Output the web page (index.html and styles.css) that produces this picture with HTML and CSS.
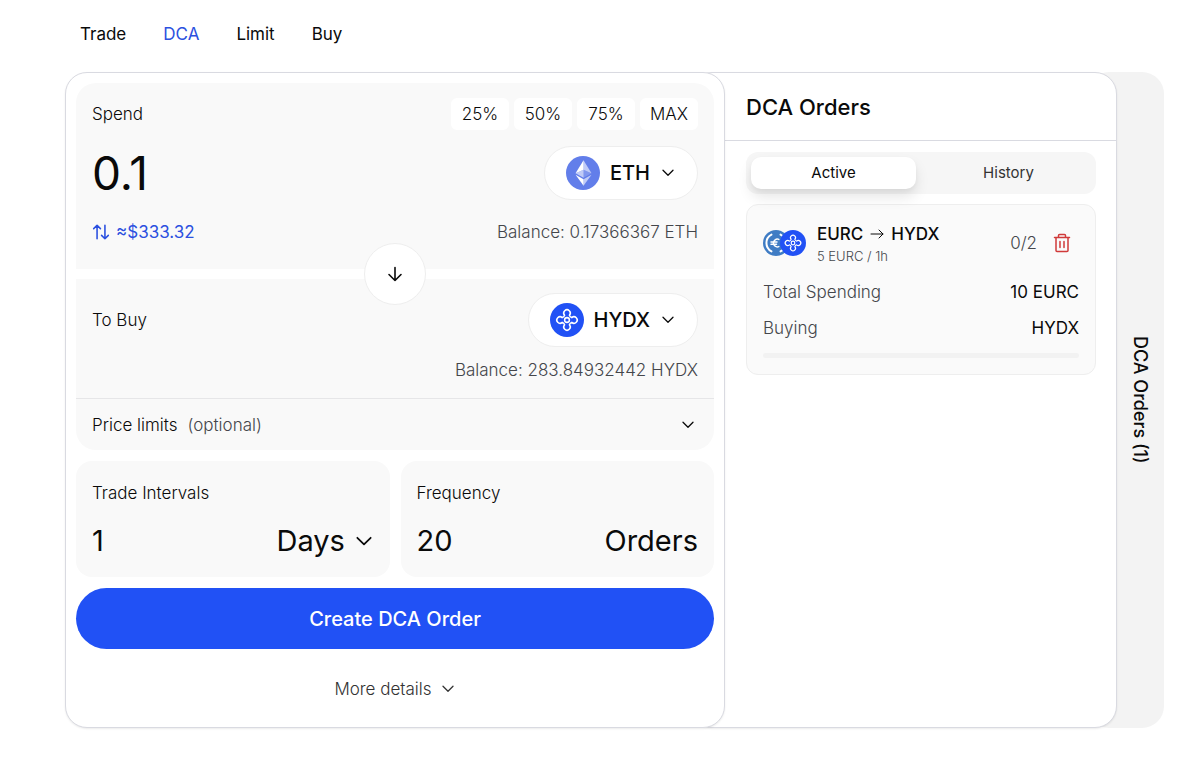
FILE: index.html
```html
<!DOCTYPE html>
<html lang="en">
<head>
    <meta charset="UTF-8">
    <meta name="viewport" content="width=device-width, initial-scale=1.0">
    <title>DCA</title>
    <link rel="stylesheet" href="styles.css">
</head>
<body>
    <!-- shared icons -->
    <svg class="defs" width="0" height="0" aria-hidden="true">
        <symbol id="chevron" viewBox="0 0 12 8">
            <path d="M1 1.2l5 5 5-5" fill="none" stroke="currentColor" stroke-width="1.3" stroke-linecap="round" stroke-linejoin="round"/>
        </symbol>
        <symbol id="hydx" viewBox="-50 -50 100 100">
            <circle r="50" fill="#2151f5"/>
            <g fill="none" stroke="#fff" stroke-width="4.5" stroke-linejoin="round">
                <path d="M-7 -14 A9.5 9.5 0 1 1 7 -14 Q9 -9 14 -7 A9.5 9.5 0 1 1 14 7 Q9 9 7 14 A9.5 9.5 0 1 1 -7 14 Q-9 9 -14 7 A9.5 9.5 0 1 1 -14 -7 Q-9 -9 -7 -14Z"/>
                <circle r="7"/>
            </g>
        </symbol>
    </svg>

    <nav class="nav">
        <a href="#trade">Trade</a>
        <a href="#dca" class="active">DCA</a>
        <a href="#limit">Limit</a>
        <a href="#buy">Buy</a>
    </nav>

    <main class="layout">
        <form class="trade" onsubmit="return false">
            <section class="spend">
                <div class="row">
                    <label for="amount">Spend</label>
                    <div class="percents">
                        <button type="button">25%</button>
                        <button type="button">50%</button>
                        <button type="button">75%</button>
                        <button type="button">MAX</button>
                    </div>
                </div>
                <div class="row">
                    <input id="amount" class="amount" type="text" value="0.1">
                    <button type="button" class="token">
                        <svg class="token-icon" viewBox="0 0 32 32">
                            <circle cx="16" cy="16" r="16" fill="#627eea"/>
                            <g fill="#fff">
                                <path fill-opacity=".6" d="M16.500 4v8.870l7.500 3.350z"/>
                                <path d="M16.500 4L9 16.220l7.500-3.350z"/>
                                <path fill-opacity=".6" d="M16.500 21.970v6.030L24 17.620z"/>
                                <path d="M16.500 28v-6.030L9 17.620z"/>
                                <path fill-opacity=".2" d="M16.500 20.570l7.500-4.350-7.500-3.350z"/>
                                <path fill-opacity=".6" d="M9 16.220l7.500 4.350v-7.700z"/>
                            </g>
                        </svg>
                        ETH
                        <svg class="chevron"><use href="#chevron"/></svg>
                    </button>
                </div>
                <div class="row">
                    <button type="button" class="fiat">
                        <svg viewBox="0 0 16 16" fill="none" stroke="currentColor" stroke-width="1.4" stroke-linecap="round" stroke-linejoin="round">
                            <path d="M4.500 14V2M1.500 5l3-3 3 3M8.500 11l3 3 3-3M11.500 14V2"/>
                        </svg>
                        ≈$333.32
                    </button>
                    <span class="balance">Balance: 0.17366367 ETH</span>
                </div>
                <button type="button" class="switch" aria-label="Switch tokens">
                    <svg viewBox="0 0 18 18" fill="none" stroke="currentColor" stroke-width="1.6" stroke-linecap="round" stroke-linejoin="round">
                        <path d="M9 2.500v13M3 9.500l6 6 6-6"/>
                    </svg>
                </button>
            </section>

            <section class="receive">
                <div class="row">
                    <span>To Buy</span>
                    <button type="button" class="token">
                        <svg class="token-icon"><use href="#hydx"/></svg>
                        HYDX
                        <svg class="chevron"><use href="#chevron"/></svg>
                    </button>
                </div>
                <span class="balance">Balance: 283.84932442 HYDX</span>
            </section>

            <button type="button" class="limits">
                <span>Price limits</span>
                <span class="muted">(optional)</span>
                <svg class="chevron"><use href="#chevron"/></svg>
            </button>

            <div class="schedule">
                <section class="box">
                    <label for="interval">Trade Intervals</label>
                    <div class="box-value">
                        <input id="interval" type="text" value="1">
                        <span class="unit">
                            <select aria-label="Interval unit">
                                <option>Days</option>
                            </select>
                            <svg class="chevron big"><use href="#chevron"/></svg>
                        </span>
                    </div>
                </section>
                <section class="box">
                    <label for="frequency">Frequency</label>
                    <div class="box-value">
                        <input id="frequency" type="text" value="20">
                        <span>Orders</span>
                    </div>
                </section>
            </div>

            <button type="submit" class="create">Create DCA Order</button>
            <button type="button" class="more">
                More details
                <svg class="chevron"><use href="#chevron"/></svg>
            </button>
        </form>

        <section class="orders">
            <h2>DCA Orders</h2>
            <div class="orders-body">
                <div class="tabs">
                    <button type="button" class="active">Active</button>
                    <button type="button">History</button>
                </div>
                <article class="order">
                    <div class="order-head">
                        <div class="pair-icons">
                            <svg viewBox="0 0 26 26">
                                <circle cx="13" cy="13" r="13" fill="#3f7cc4"/>
                                <g fill="none" stroke="#fff" stroke-linecap="round">
                                    <path stroke-width="2" d="M8.500 4.600a9.500 9.500 0 0 0 0 16.800M17.500 4.600a9.500 9.500 0 0 1 0 16.800"/>
                                    <path stroke-width="1.500" d="M15.800 9.400a3.900 3.900 0 1 0 0 7.200M8 12h6M8 14.200h5.500"/>
                                </g>
                            </svg>
                            <svg><use href="#hydx"/></svg>
                        </div>
                        <div class="pair">
                            <h3>EURC
                                <svg viewBox="0 0 14 12" fill="none" stroke="currentColor" stroke-linecap="round" stroke-linejoin="round"><path d="M1 6h12M9 2l4 4-4 4"/></svg>
                                HYDX</h3>
                            <p>5 EURC / 1h</p>
                        </div>
                        <span class="count">0/2</span>
                        <button type="button" class="delete" aria-label="Cancel order">
                            <svg viewBox="0 0 18 20" fill="none" stroke="currentColor" stroke-width="1.500" stroke-linecap="round" stroke-linejoin="round">
                                <path d="M1.500 4.500h15M5.500 4.500V2.500q0-1 1-1h5q1 0 1 1v2M3 4.500V17.500q0 1 1 1h10q1 0 1-1V4.500M7 8.500v6M11 8.500v6"/>
                            </svg>
                        </button>
                    </div>
                    <dl>
                        <dt>Total Spending</dt>
                        <dd>10 EURC</dd>
                        <dt>Buying</dt>
                        <dd>HYDX</dd>
                    </dl>
                    <div class="progress"></div>
                </article>
            </div>
        </section>

        <button type="button" class="side-tab"><span>DCA Orders (1)</span></button>
    </main>
</body>
</html>
```
FILE: styles.css
```css
* {
    box-sizing: border-box;
}

body {
    margin: 0;
    padding: 18px 36px 38px 65px;
    background-color: #fff;
    color: #0a0a0a;
    font-family: Inter, "Liberation Sans", sans-serif;
    font-size: 17px;
    line-height: 32px;
}

button, input, select {
    margin: 0;
    padding: 0;
    border: none;
    background: none;
    color: inherit;
    font: inherit;
}

button {
    cursor: pointer;
}

svg {
    display: block;
    flex: none;
}

.defs {
    position: absolute;
}

.nav {
    display: flex;
    gap: 37px;
    padding: 0 15px;
    margin-bottom: 22px;
}

.nav a {
    color: #0a0a0a;
    text-decoration: none;
}

.nav a.active {
    color: #2b50e0;
}

/* main panels */
.layout {
    display: grid;
    grid-template-columns: minmax(0, 660fr) minmax(0, 392fr) 47px;
}

.trade, .orders {
    background-color: #fff;
    border: 1px solid #d9dae1;
    border-radius: 22px;
    box-shadow: 0 1px 2px rgba(0, 0, 0, 0.08);
}

.trade {
    position: relative;
    z-index: 2;
    display: flex;
    flex-direction: column;
    padding: 10px;
    font-weight: 300;
}

.row {
    display: flex;
    align-items: center;
    justify-content: space-between;
}

.spend, .receive, .limits, .box {
    background-color: #f9f9f9;
}

.spend {
    position: relative;
    display: flex;
    flex-direction: column;
    gap: 16px;
    padding: 15px 16px 21px;
    margin-bottom: 10px;
    border-radius: 20px 20px 0 0;
}

.percents {
    display: flex;
    gap: 5px;
}

.percents button {
    width: 58px;
    border-radius: 6px;
    background-color: #fff;
}

.amount {
    flex: 1;
    min-width: 0;
    height: 54px;
    font-size: 46px;
    font-weight: 400;
}

.token {
    display: flex;
    align-items: center;
    gap: 10px;
    height: 54px;
    padding: 0 21px;
    border: 1px solid #eee;
    border-radius: 27px;
    background-color: #fff;
    font-size: 20px;
    font-weight: 500;
}

.token-icon {
    width: 34px;
    height: 34px;
}

.chevron {
    width: 12px;
    height: 8px;
    margin: 0 2px;
}

.fiat {
    display: flex;
    align-items: center;
    gap: 6px;
    color: #2b50e0;
    font-weight: 400;
}

.fiat svg {
    width: 18px;
    height: 18px;
}

.balance {
    color: #44464b;
}

.switch {
    position: absolute;
    left: 50%;
    bottom: -36px;
    display: grid;
    place-items: center;
    width: 62px;
    height: 62px;
    border: 1px solid #eee;
    border-radius: 50%;
    background-color: #fff;
    transform: translateX(-50%);
}

.switch svg {
    width: 18px;
    height: 18px;
}

.receive {
    display: flex;
    flex-direction: column;
    gap: 7px;
    padding: 14px 16px 12px;
}

.receive .balance {
    text-align: right;
}

.limits {
    display: flex;
    align-items: center;
    gap: 10px;
    height: 52px;
    padding: 0 18px 0 16px;
    border-top: 1px solid #e6e6e8;
    border-radius: 0 0 20px 20px;
}

.limits .chevron {
    margin-left: auto;
}

.muted {
    color: #44464b;
}

.schedule {
    display: grid;
    grid-template-columns: repeat(2, minmax(0, 1fr));
    gap: 11px;
    margin: 11px 0;
}

.box {
    padding: 16px;
    border-radius: 16px;
}

.box-value {
    display: flex;
    justify-content: space-between;
    margin-top: 12px;
    font-size: 29px;
    font-weight: 400;
    line-height: 40px;
}

.box-value input {
    flex: 1;
    min-width: 0;
    height: 40px;
}

.unit {
    display: flex;
    align-items: center;
    gap: 8px;
}

.unit select {
    appearance: none;
}

.chevron.big {
    width: 16px;
    height: 11px;
}

.create {
    height: 61px;
    border-radius: 31px;
    background-color: #2151f5;
    color: #fff;
    font-size: 20px;
    font-weight: 500;
}

.more {
    display: flex;
    align-items: center;
    justify-content: center;
    gap: 8px;
    margin: 24px 0 12px;
    color: #333;
}

/* orders panel slides out from behind the form */
.orders {
    position: relative;
    z-index: 1;
    margin-left: -35px;
    padding-left: 34px;
}

.orders h2 {
    margin: 0;
    padding: 18px 21px 17px;
    border-bottom: 1px solid #d9dae1;
    font-size: 22px;
    font-weight: 500;
}

.orders-body {
    padding: 11px 20px 20px 21px;
}

.tabs {
    display: grid;
    grid-template-columns: 1fr 1fr;
    gap: 10px;
    padding: 5px;
    margin-bottom: 10px;
    border-radius: 12px;
    background-color: #f6f6f6;
    font-size: 15px;
}

.tabs button {
    border-radius: 10px;
    color: #333;
}

.tabs .active {
    background-color: #fff;
    box-shadow: 0 8px 14px rgba(0, 0, 0, 0.1), 0 2px 4px rgba(0, 0, 0, 0.04);
    color: #0a0a0a;
}

.order {
    padding: 16px;
    border: 1px solid #eee;
    border-radius: 12px;
    background-color: #fafafa;
}

.order-head {
    display: flex;
    align-items: center;
}

.pair-icons {
    display: flex;
    margin-right: 11px;
}

.pair-icons svg {
    width: 26px;
    height: 26px;
}

.pair-icons svg + svg {
    margin-left: -9px;
}

.pair {
    flex: 1;
}

.pair h3 {
    display: flex;
    align-items: center;
    gap: 7px;
    margin: 0;
    font-size: 17px;
    font-weight: 500;
    line-height: 26px;
}

.pair h3 svg {
    width: 14px;
    height: 12px;
}

.pair p {
    margin: 0;
    color: #44464b;
    font-size: 13px;
    font-weight: 300;
    line-height: 18px;
}

.count {
    margin-right: 16px;
    color: #44464b;
    font-weight: 300;
}

.delete {
    margin-right: 8px;
    color: #d03a3a;
}

.delete svg {
    width: 18px;
    height: 20px;
}

.order dl {
    display: grid;
    grid-template-columns: 1fr auto;
    row-gap: 4px;
    margin: 11px 0 9px;
}

.order dt {
    color: #44464b;
    font-weight: 300;
}

.order dd {
    margin: 0;
    text-align: right;
}

.progress {
    height: 5px;
    border-radius: 2px;
    background-color: #f2f2f2;
}

.side-tab {
    display: flex;
    align-items: center;
    justify-content: flex-end;
    margin-left: -30px;
    padding-right: 8px;
    border-radius: 22px;
    background-color: #f3f3f3;
    font-size: 18px;
    font-weight: 500;
}

.side-tab span {
    writing-mode: vertical-rl;
}
```
